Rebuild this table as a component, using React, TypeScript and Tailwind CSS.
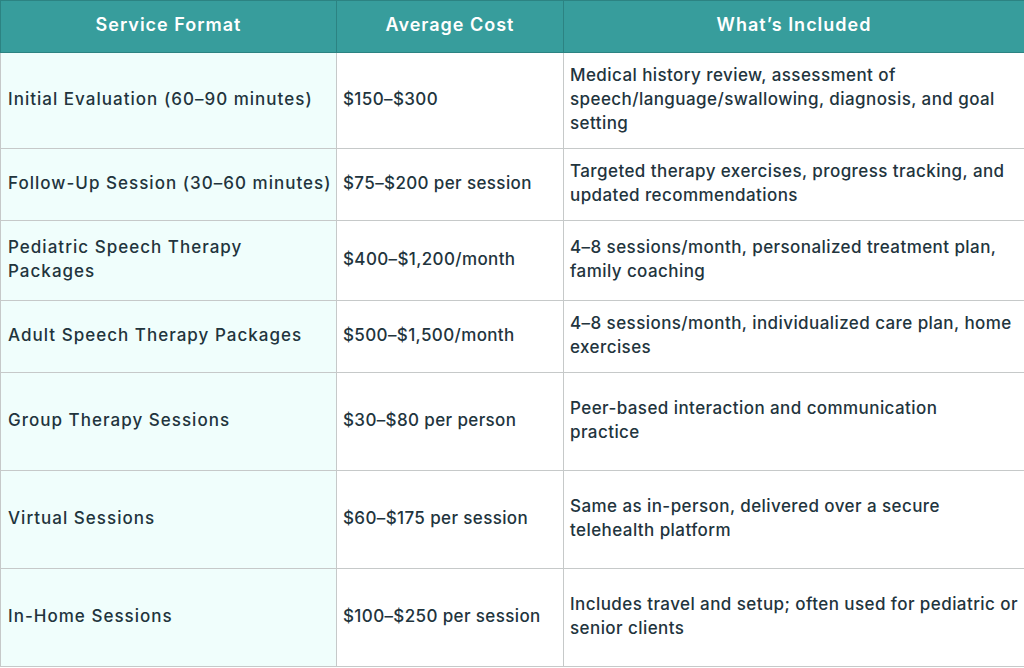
const rows = [
  {
    format: ['Initial Evaluation (60–90 minutes)'],
    cost: '$150–$300',
    included: ['Medical history review, assessment of', 'speech/language/swallowing, diagnosis, and goal', 'setting'],
    h: 'h-[96px]',
  },
  {
    format: ['Follow-Up Session (30–60 minutes)'],
    cost: '$75–$200 per session',
    included: ['Targeted therapy exercises, progress tracking, and', 'updated recommendations'],
    h: 'h-[72px]',
  },
  {
    format: ['Pediatric Speech Therapy', 'Packages'],
    cost: '$400–$1,200/month',
    included: ['4–8 sessions/month, personalized treatment plan,', 'family coaching'],
    h: 'h-[80px]',
  },
  {
    format: ['Adult Speech Therapy Packages'],
    cost: '$500–$1,500/month',
    included: ['4–8 sessions/month, individualized care plan, home', 'exercises'],
    h: 'h-[72px]',
  },
  {
    format: ['Group Therapy Sessions'],
    cost: '$30–$80 per person',
    included: ['Peer-based interaction and communication', 'practice'],
    h: 'h-[98px]',
  },
  {
    format: ['Virtual Sessions'],
    cost: '$60–$175 per session',
    included: ['Same as in-person, delivered over a secure', 'telehealth platform'],
    h: 'h-[98px]',
  },
  {
    format: ['In-Home Sessions'],
    cost: '$100–$250 per session',
    included: ['Includes travel and setup; often used for pediatric or', 'senior clients'],
    h: 'h-[98px]',
  },
]

function Lines({ lines }: { lines: string[] }) {
  return (
    <>
      {lines.map((line) => (
        <span key={line} className="block whitespace-nowrap">
          {line}
        </span>
      ))}
    </>
  )
}

export default function App() {
  return (
    <div className="h-[668px] w-[1024px] overflow-hidden bg-white font-['Inter',sans-serif] text-[#22343d]">
      <table className="w-[1024px] table-fixed border-collapse">
        <colgroup>
          <col className="w-[336px]" />
          <col className="w-[227px]" />
          <col className="w-[461px]" />
        </colgroup>
        <thead>
          <tr className="h-[52px] bg-[#379d9c] text-[18px] tracking-[0.055em] text-white">
            <th className="border border-[#2c8382] pb-[5px] font-semibold">Service Format</th>
            <th className="border border-[#2c8382] pb-[5px] font-semibold">Average Cost</th>
            <th className="border border-[#2c8382] pb-[5px] font-semibold">What’s Included</th>
          </tr>
        </thead>
        <tbody className="text-[17px] font-medium leading-6">
          {rows.map((row) => (
            <tr key={row.cost} className={row.h}>
              <td className="overflow-hidden border border-[#c6c9c9] bg-[#f0fefc] pb-1 pl-[7px] pr-0 align-middle tracking-[0.06em]">
                <Lines lines={row.format} />
              </td>
              <td className="border border-[#c6c9c9] px-[6px] pb-1 align-middle tracking-[0.022em]">{row.cost}</td>
              <td className="overflow-hidden border border-[#c6c9c9] pb-1 pl-[6px] pr-0 align-middle tracking-[0.025em]">
                <Lines lines={row.included} />
              </td>
            </tr>
          ))}
        </tbody>
      </table>
    </div>
  )
}
